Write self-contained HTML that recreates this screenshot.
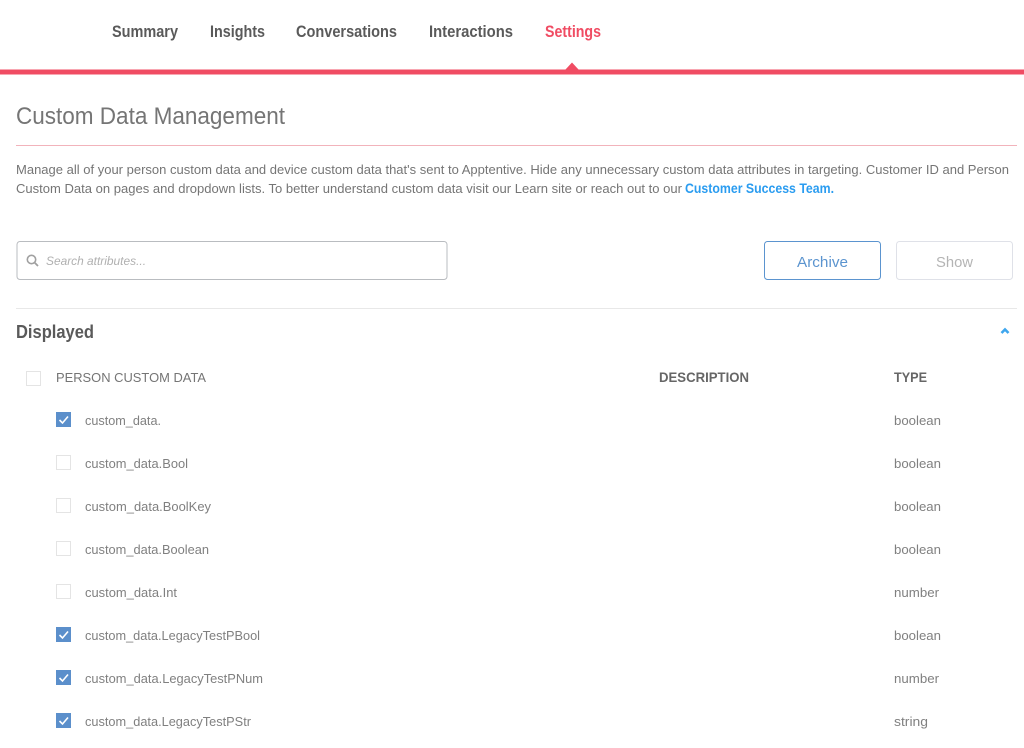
<!DOCTYPE html>
<html><head><meta charset="utf-8"><style>
html,body{margin:0;padding:0;background:#fff;width:1024px;height:748px;overflow:hidden}
svg{display:block;filter:blur(0.35px)}
text{font-family:"Liberation Sans",sans-serif;white-space:pre}
.n{font-size:17px;font-weight:bold;fill:#5a5a5a}
.p{font-size:13px;fill:#757575}
.r{font-size:13px;fill:#808080}
.u{fill:#fff;stroke:#e4e4e4;stroke-width:1}
.c{fill:#5b8fcb}
.k{fill:none;stroke:#fff;stroke-width:1.6}
</style></head><body>
<svg width="1024" height="748" viewBox="0 0 1024 748" xmlns="http://www.w3.org/2000/svg">
<text class="n" x="112" y="37" textLength="66" lengthAdjust="spacingAndGlyphs">Summary</text>
<text class="n" x="210" y="37" textLength="55" lengthAdjust="spacingAndGlyphs">Insights</text>
<text class="n" x="296" y="37" textLength="101" lengthAdjust="spacingAndGlyphs">Conversations</text>
<text class="n" x="429" y="37" textLength="84" lengthAdjust="spacingAndGlyphs">Interactions</text>
<text class="n" x="545" y="37" textLength="56" lengthAdjust="spacingAndGlyphs" style="fill:#f04c63">Settings</text>
<rect x="0" y="69.5" width="1024" height="5" fill="#f04c63"/>
<path d="M565 70 L572 62.5 L579 70Z" fill="#f04c63"/>

<text x="16" y="124" textLength="269" lengthAdjust="spacingAndGlyphs" style="font-size:24px;fill:#757575">Custom Data Management</text>
<rect x="16" y="145" width="1001" height="1" fill="#f2b3bb"/>

<text class="p" x="16" y="174" textLength="993" lengthAdjust="spacingAndGlyphs">Manage all of your person custom data and device custom data that's sent to Apptentive. Hide any unnecessary custom data attributes in targeting. Customer ID and Person</text>
<text class="p" x="16" y="193" textLength="666" lengthAdjust="spacingAndGlyphs">Custom Data on pages and dropdown lists. To better understand custom data visit our Learn site or reach out to our</text>
<text x="685" y="193" textLength="149" lengthAdjust="spacingAndGlyphs" style="font-size:14px;font-weight:bold;fill:#2a9cf0">Customer Success Team.</text>

<rect x="17" y="241.5" width="430" height="38" rx="3" fill="#fff" stroke="#b9bcc0"/>
<circle cx="31.5" cy="259.5" r="4.2" fill="none" stroke="#a0a0a0" stroke-width="1.6"/>
<path d="M34.5 262.5 L38 266" stroke="#a0a0a0" stroke-width="1.8" fill="none"/>
<text x="46" y="265" textLength="100" lengthAdjust="spacingAndGlyphs" style="font-size:12px;font-style:italic;fill:#b0b0b0">Search attributes...</text>

<rect x="764.5" y="241.5" width="116" height="38" rx="3" fill="#fff" stroke="#5b94cf"/>
<text x="797" y="267" textLength="51" lengthAdjust="spacingAndGlyphs" style="font-size:15px;fill:#5b94cf">Archive</text>
<rect x="896.5" y="241.5" width="116" height="38" rx="3" fill="#fff" stroke="#dfe1e8"/>
<text x="936" y="267" textLength="37" lengthAdjust="spacingAndGlyphs" style="font-size:15px;fill:#b4b4b4">Show</text>

<rect x="16" y="308" width="1001" height="1" fill="#e8e8e8"/>
<text x="16" y="338" textLength="78" lengthAdjust="spacingAndGlyphs" style="font-size:18px;font-weight:bold;fill:#5a5a5a">Displayed</text>
<path d="M1001.5 333 L1005 329.5 L1008.5 333" fill="none" stroke="#3ea6ee" stroke-width="2.6"/>

<rect class="u" x="26.5" y="371.5" width="14" height="14"/>
<text x="56" y="382" textLength="150" lengthAdjust="spacingAndGlyphs" style="font-size:13px;fill:#757575">PERSON CUSTOM DATA</text>
<text x="659" y="382" textLength="90" lengthAdjust="spacingAndGlyphs" style="font-size:14px;font-weight:bold;fill:#666">DESCRIPTION</text>
<text x="894" y="382" textLength="33" lengthAdjust="spacingAndGlyphs" style="font-size:14px;font-weight:bold;fill:#666">TYPE</text>

<rect class="c" x="56" y="412" width="15" height="15"/><path class="k" d="M59.5 420 L62.5 423 L68 416.5"/>
<text class="r" x="85" y="425" textLength="76" lengthAdjust="spacingAndGlyphs">custom_data.</text>
<text class="r" x="894" y="425" textLength="47" lengthAdjust="spacingAndGlyphs">boolean</text>

<rect class="u" x="56.5" y="455.5" width="14" height="14"/>
<text class="r" x="85" y="468" textLength="103" lengthAdjust="spacingAndGlyphs">custom_data.Bool</text>
<text class="r" x="894" y="468" textLength="47" lengthAdjust="spacingAndGlyphs">boolean</text>

<rect class="u" x="56.5" y="498.5" width="14" height="14"/>
<text class="r" x="85" y="511" textLength="126" lengthAdjust="spacingAndGlyphs">custom_data.BoolKey</text>
<text class="r" x="894" y="511" textLength="47" lengthAdjust="spacingAndGlyphs">boolean</text>

<rect class="u" x="56.5" y="541.5" width="14" height="14"/>
<text class="r" x="85" y="554" textLength="124" lengthAdjust="spacingAndGlyphs">custom_data.Boolean</text>
<text class="r" x="894" y="554" textLength="47" lengthAdjust="spacingAndGlyphs">boolean</text>

<rect class="u" x="56.5" y="584.5" width="14" height="14"/>
<text class="r" x="85" y="597" textLength="92" lengthAdjust="spacingAndGlyphs">custom_data.Int</text>
<text class="r" x="894" y="597" textLength="45" lengthAdjust="spacingAndGlyphs">number</text>

<rect class="c" x="56" y="627" width="15" height="15"/><path class="k" d="M59.5 635 L62.5 638 L68 631.5"/>
<text class="r" x="85" y="640" textLength="175" lengthAdjust="spacingAndGlyphs">custom_data.LegacyTestPBool</text>
<text class="r" x="894" y="640" textLength="47" lengthAdjust="spacingAndGlyphs">boolean</text>

<rect class="c" x="56" y="670" width="15" height="15"/><path class="k" d="M59.5 678 L62.5 681 L68 674.5"/>
<text class="r" x="85" y="683" textLength="178" lengthAdjust="spacingAndGlyphs">custom_data.LegacyTestPNum</text>
<text class="r" x="894" y="683" textLength="45" lengthAdjust="spacingAndGlyphs">number</text>

<rect class="c" x="56" y="713" width="15" height="15"/><path class="k" d="M59.5 721 L62.5 724 L68 717.5"/>
<text class="r" x="85" y="726" textLength="166" lengthAdjust="spacingAndGlyphs">custom_data.LegacyTestPStr</text>
<text class="r" x="894" y="726" textLength="34" lengthAdjust="spacingAndGlyphs">string</text>
</svg>
</body></html>
